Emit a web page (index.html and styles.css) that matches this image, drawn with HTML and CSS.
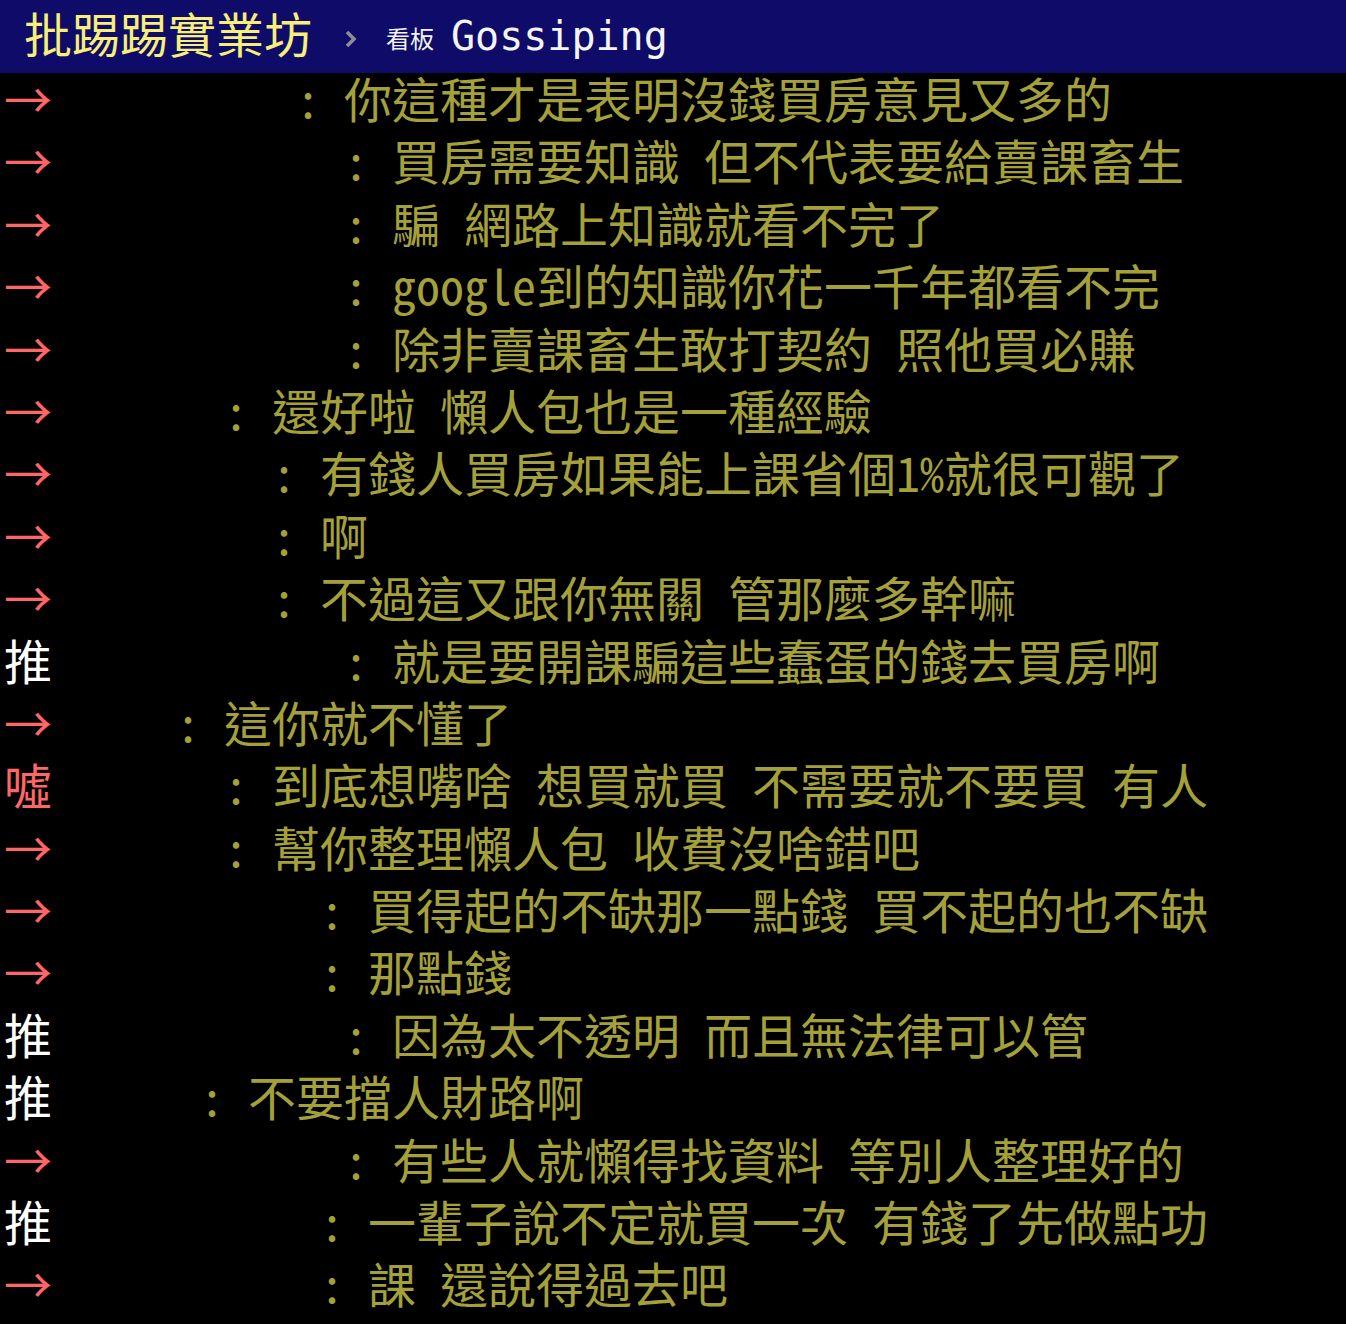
FILE: index.html
```html
<!DOCTYPE html>
<html lang="zh-Hant">
<head>
<meta charset="utf-8">
<title>看板 Gossiping - 批踢踢實業坊</title>
<link rel="stylesheet" href="styles.css">
</head>
<body>
<header class="topbar">
  <a class="logo" href="#">批踢踢實業坊</a>
  <svg class="chevron" width="14" height="20" viewBox="0 0 14 20"><polyline points="3,3 10,10 3,17" fill="none" stroke="#8c8c96" stroke-width="3.6"/></svg>
  <span class="board-label">看板</span>
  <span class="board-name">Gossiping</span>
</header>
<main class="comments">
<div class="push"><span class="tag arrow">→</span><span class="uid">         </span><span class="content">: 你這種才是表明沒錢買房意見又多的</span></div>
<div class="push"><span class="tag arrow">→</span><span class="uid">           </span><span class="content">: 買房需要知識 但不代表要給賣課畜生</span></div>
<div class="push"><span class="tag arrow">→</span><span class="uid">           </span><span class="content">: 騙 網路上知識就看不完了</span></div>
<div class="push"><span class="tag arrow">→</span><span class="uid">           </span><span class="content">: google到的知識你花一千年都看不完</span></div>
<div class="push"><span class="tag arrow">→</span><span class="uid">           </span><span class="content">: 除非賣課畜生敢打契約 照他買必賺</span></div>
<div class="push"><span class="tag arrow">→</span><span class="uid">      </span><span class="content">: 還好啦 懶人包也是一種經驗</span></div>
<div class="push"><span class="tag arrow">→</span><span class="uid">        </span><span class="content">: 有錢人買房如果能上課省個1%就很可觀了</span></div>
<div class="push"><span class="tag arrow">→</span><span class="uid">        </span><span class="content">: 啊</span></div>
<div class="push"><span class="tag arrow">→</span><span class="uid">        </span><span class="content">: 不過這又跟你無關 管那麼多幹嘛</span></div>
<div class="push"><span class="tag up">推</span><span class="uid">           </span><span class="content">: 就是要開課騙這些蠢蛋的錢去買房啊</span></div>
<div class="push"><span class="tag arrow">→</span><span class="uid">    </span><span class="content">: 這你就不懂了</span></div>
<div class="push"><span class="tag boo">噓</span><span class="uid">      </span><span class="content">: 到底想嘴啥 想買就買 不需要就不要買 有人</span></div>
<div class="push"><span class="tag arrow">→</span><span class="uid">      </span><span class="content">: 幫你整理懶人包 收費沒啥錯吧</span></div>
<div class="push"><span class="tag arrow">→</span><span class="uid">          </span><span class="content">: 買得起的不缺那一點錢 買不起的也不缺</span></div>
<div class="push"><span class="tag arrow">→</span><span class="uid">          </span><span class="content">: 那點錢</span></div>
<div class="push"><span class="tag up">推</span><span class="uid">           </span><span class="content">: 因為太不透明 而且無法律可以管</span></div>
<div class="push"><span class="tag up">推</span><span class="uid">     </span><span class="content">: 不要擋人財路啊</span></div>
<div class="push"><span class="tag arrow">→</span><span class="uid">           </span><span class="content">: 有些人就懶得找資料 等別人整理好的</span></div>
<div class="push"><span class="tag up">推</span><span class="uid">          </span><span class="content">: 一輩子說不定就買一次 有錢了先做點功</span></div>
<div class="push"><span class="tag arrow">→</span><span class="uid">          </span><span class="content">: 課 還說得過去吧</span></div>
</main>
</body>
</html>
```
FILE: styles.css
```css
html, body {
  margin: 0;
  padding: 0;
  background: #000;
}

body {
  font-family: "Noto Sans Mono CJK TC", "Noto Sans CJK TC", monospace;
  font-feature-settings: "hwid";
  overflow: hidden;
}

.topbar {
  display: flex;
  align-items: center;
  height: 73px;
  background: #0e0b69;
  padding-left: 24px;
}

.logo {
  font-family: "Noto Sans CJK TC", sans-serif;
  font-size: 48px;
  line-height: 1;
  color: #f8ef78;
  text-decoration: none;
  margin-top: -10px;
}

.chevron {
  margin-left: 32px;
  margin-top: 4px;
}

.board-label {
  font-family: "Noto Sans CJK TC", sans-serif;
  font-size: 24px;
  color: #f2f2f2;
  margin-left: 28px;
  margin-top: 2px;
}

.board-name {
  font-family: "DejaVu Sans Mono", monospace;
  font-size: 40px;
  color: #f4f4f4;
  margin-left: 17px;
  margin-top: -2px;
}

.comments {
  padding-left: 4px;
  margin-top: -7px;
}

.push {
  font-size: 48px;
  line-height: 62.4px;
  height: 62.4px;
  white-space: pre;
}

.tag {
  display: inline-block;
  width: 76px;
}

.arrow { color: #ff6666; }
.up { color: #ffffff; }
.boo { color: #ff6666; }

.content {
  color: #a5a13a;
}
```
